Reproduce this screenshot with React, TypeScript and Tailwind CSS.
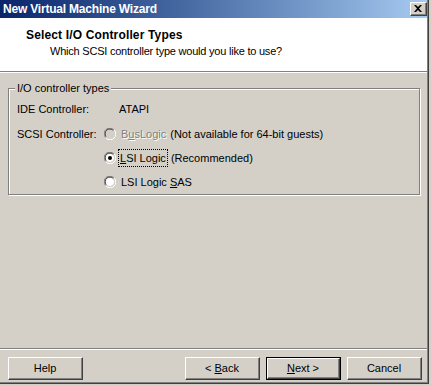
import React from "react";

const U = ({ children }: { children: React.ReactNode }) => <span className="underline underline-offset-[1px]">{children}</span>;

function Radio({ checked, disabled }: { checked?: boolean; disabled?: boolean }) {
  return (
    <svg width="12" height="12" viewBox="0 0 12 12" className="shrink-0">
      <path d="M10 2 A5.5 5.5 0 0 0 1.5 9.5" stroke="#808080" strokeWidth="1" fill="none" />
      <path d="M9.2 2.6 A4.6 4.6 0 0 0 2.3 8.7" stroke="#404040" strokeWidth="1" fill="none" />
      <circle cx="6" cy="6" r="4" fill={disabled ? "#d4d0c8" : "#ffffff"} />
      <path d="M1.9 10 A5.5 5.5 0 0 0 10.2 2.1" stroke="#ffffff" strokeWidth="1" fill="none" />
      <path d="M2.7 9.2 A4.6 4.6 0 0 0 9.4 2.8" stroke="#d4d0c8" strokeWidth="1" fill="none" />
      {checked && <circle cx="6" cy="6" r="2" fill="#000" />}
    </svg>
  );
}

function Button({ children, def }: { children: React.ReactNode; def?: boolean }) {
  return (
    <div className={`w-[75px] h-[23px] ${def ? "border border-black" : ""} flex shrink-0`}>
      <div className="flex-1 border-t border-l border-t-white border-l-white border-r border-b border-r-[#404040] border-b-[#404040] flex">
        <div className="flex-1 border-r border-b border-r-[#808080] border-b-[#808080] flex items-center justify-center text-[11px] text-black">
          <span className="whitespace-pre">{children}</span>
        </div>
      </div>
    </div>
  );
}

export default function App() {
  return (
    <div
      className="w-[431px] h-[386px] bg-[#d4d0c8] overflow-hidden"
      style={{ fontFamily: '"Liberation Sans", Arial, sans-serif' }}
    >
      <div className="w-[429px] h-[384px] flex flex-col border-r border-b border-r-[#404040] border-b-[#404040]">
        <div className="flex-1 flex flex-col border-r border-b border-r-[#808080] border-b-[#808080]">
          {/* Title bar */}
          <div className="h-[18px] shrink-0 flex items-center justify-between pl-[3px] pr-0 bg-gradient-to-r from-[#0a246a] to-[#a6caf0]">
            <span className="text-white font-bold text-[12px] tracking-[-0.2px] leading-none">New Virtual Machine Wizard</span>
            <div className="w-[17px] h-[14px] bg-[#d4d0c8] border-t border-l border-t-white border-l-white border-r border-b border-r-[#404040] border-b-[#404040] flex">
              <div className="flex-1 border-r border-b border-r-[#808080] border-b-[#808080] flex items-center justify-center">
                <svg width="8" height="7" viewBox="0 0 8 7">
                  <path d="M0 0 L2 0 L4 2 L6 0 L8 0 L5 3.5 L8 7 L6 7 L4 5 L2 7 L0 7 L3 3.5 Z" fill="#000" />
                </svg>
              </div>
            </div>
          </div>
          {/* Header */}
          <div className="h-[53px] shrink-0 bg-white pl-[26px] pt-[10px] flex flex-col">
            <div className="text-[12px] font-bold text-black leading-[14px] tracking-[0.15px]">Select I/O Controller Types</div>
            <div className="text-[11px] text-black leading-[13px] pl-[24px] mt-[3px] tracking-[-0.22px]">Which SCSI controller type would you like to use?</div>
          </div>
          <div className="h-[2px] shrink-0 border-t border-t-[#808080] border-b border-b-white" />
          {/* Body */}
          <div className="flex-1 flex flex-col pl-[8px] pr-[5px] pt-[10px]">
            <div className="relative mt-[5px] w-[412px] h-[107px] border border-[#808080] shadow-[inset_1px_1px_0_#ffffff,1px_1px_0_#ffffff]">
              <span className="absolute -top-[7px] left-[6px] bg-[#d4d0c8] px-[2px] text-[11px] leading-[13px] text-black">I/O controller types</span>
              <div className="flex flex-col pl-[8px] pt-[13px] text-[11px] text-black">
                <div className="flex items-center h-[14px]">
                  <span className="w-[102px]">IDE Controller:</span>
                  <span>ATAPI</span>
                </div>
                <div className="flex items-center h-[14px] mt-[11px]">
                  <span className="w-[87px]">SCSI Controller:</span>
                  <Radio disabled />
                  <span className="ml-[5px] text-[#808080] [text-shadow:1px_1px_0_#ffffff]">B<U>u</U>sLogic</span>
                  <span className="ml-[4px]">(Not available for 64-bit guests)</span>
                </div>
                <div className="flex items-center h-[14px] mt-[10px] pl-[87px]">
                  <Radio checked />
                  <span className="ml-[3px] px-[1px] outline outline-1 outline-dotted outline-black">
                    <U>L</U>SI Logic
                  </span>
                  <span className="ml-[4px]">(Recommended)</span>
                </div>
                <div className="flex items-center h-[14px] mt-[10px] pl-[87px]">
                  <Radio />
                  <span className="ml-[5px]">LSI Logic <U>S</U>AS</span>
                </div>
              </div>
            </div>
            <div className="flex-1" />
            <div className="-ml-[8px] -mr-[5px] h-[2px] border-t border-t-[#808080] border-b border-b-white" />
            <div className="flex items-start h-[32px] pt-[7px]">
              <Button>Help</Button>
              <div className="flex-1" />
              <Button>{"< "}<U>B</U>ack</Button>
              <div className="w-[6px] shrink-0" />
              <Button def>
                <U>N</U>{"ext >"}
              </Button>
              <div className="w-[6px] shrink-0" />
              <Button>Cancel</Button>
            </div>
          </div>
        </div>
      </div>
    </div>
  );
}
